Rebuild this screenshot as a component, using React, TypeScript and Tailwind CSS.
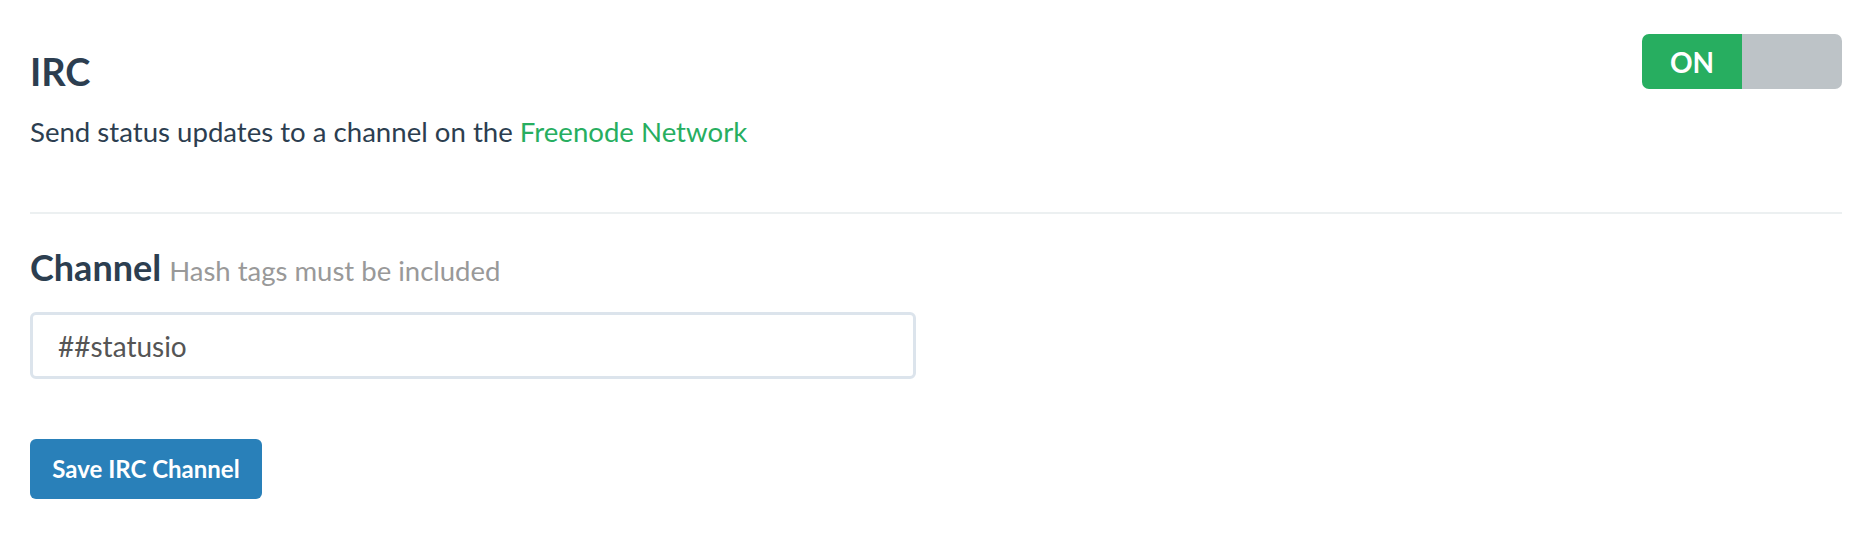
import React from "react";

export default function App() {
  return (
    <div className="min-h-[546px] w-full bg-white px-[30px] pt-[34px] text-[#2c3e50]" style={{ fontFamily: "Lato, 'Open Sans', sans-serif" }}>
      <div className="flex items-start justify-between">
        <div>
          <h2 className="mt-[14px] text-[38px] font-bold leading-[46px]">IRC</h2>
          <p className="mt-[21px] text-[27.6px] leading-[34px]">
            Send status updates to a channel on the <a className="text-[#27ae60]">Freenode Network</a>
          </p>
        </div>
        <div className="flex h-[55px] w-[200px] overflow-hidden rounded-[7px]">
          <div className="flex w-[100px] items-center justify-center bg-[#27ae60] text-[28px] font-bold text-white">ON</div>
          <div className="flex-1 bg-[#bdc3c7]" />
        </div>
      </div>
      <div className="mt-[63px] h-[2px] bg-[#ecf0f1]" />
      <div className="mt-[32px] flex items-baseline gap-[8px]">
        <span className="text-[36px] font-bold leading-[43px]">Channel</span>
        <span className="text-[27.5px] leading-[43px] text-[#999999]">Hash tags must be included</span>
      </div>
      <div className="mt-[20px] flex h-[67px] w-[886px] items-center rounded-[6px] border-[3px] border-[#dce4ec] px-[25px] text-[28px] text-[#555555]">
        ##statusio
      </div>
      <button className="mt-[60px] h-[60px] w-[232px] rounded-[6px] bg-[#2980b9] text-[24px] font-bold text-white">
        Save IRC Channel
      </button>
    </div>
  );
}
